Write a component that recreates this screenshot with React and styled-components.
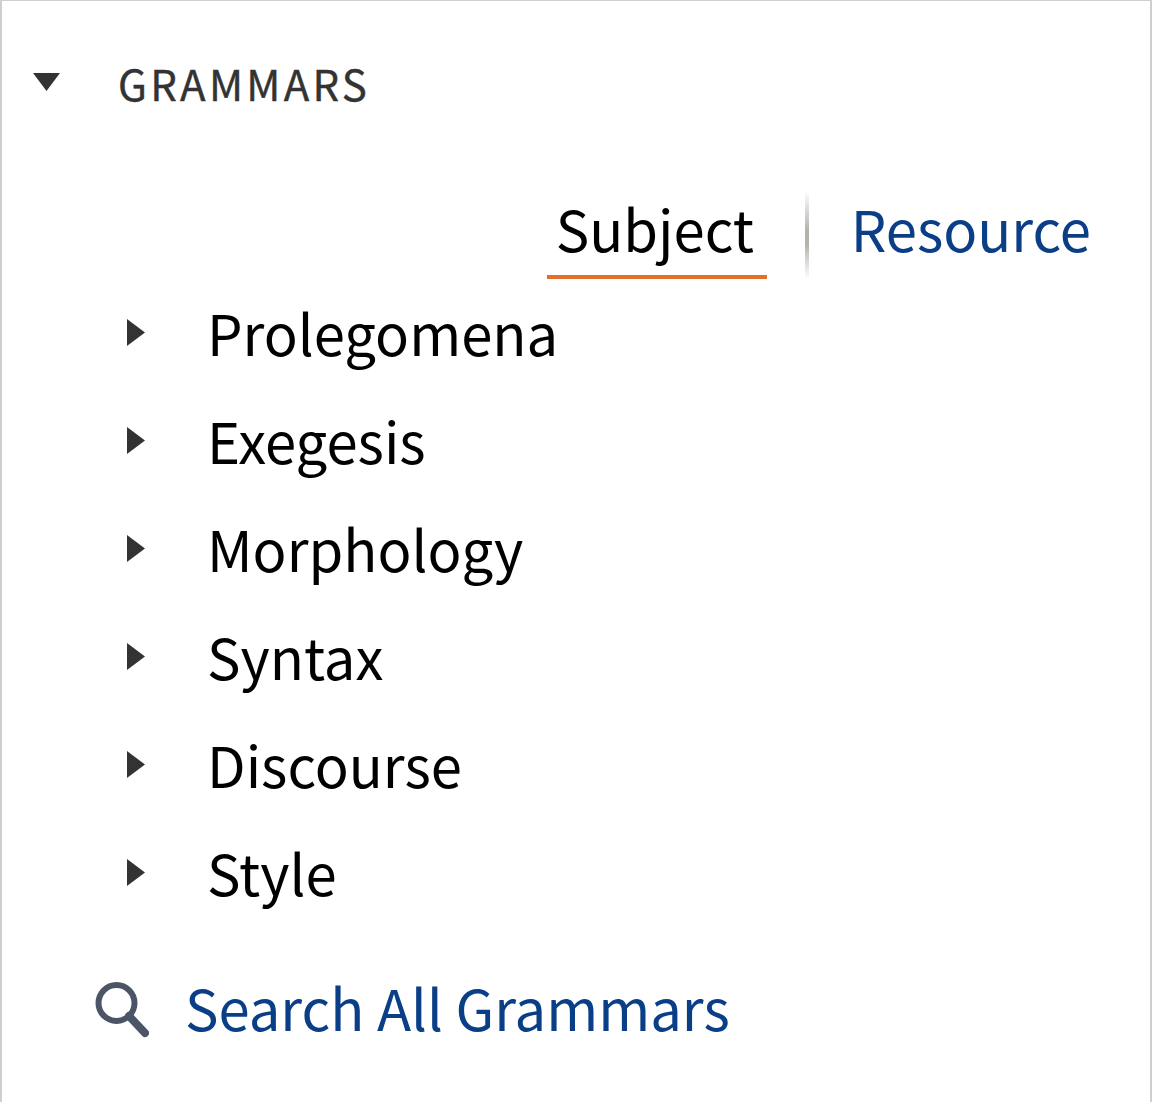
import React from "react";
import styled, { createGlobalStyle } from "styled-components";

const topics = ["Prolegomena", "Exegesis", "Morphology", "Syntax", "Discourse", "Style"];

const App = () => {
  return (
    <>
      <GlobalStyle />
      <Panel>
        <Header>
          <CaretDown viewBox="0 0 27 18">
            <path d="M0 0H27L13.5 18Z" />
          </CaretDown>
          <Title>GRAMMARS</Title>
        </Header>
        <Tabs>
          <Tab $active>Subject</Tab>
          <Divider />
          <Tab>Resource</Tab>
        </Tabs>
        <TopicList>
          {topics.map((topic) => (
            <Topic key={topic}>
              <CaretRight viewBox="0 0 18 27">
                <path d="M0 0L18 13.5L0 27Z" />
              </CaretRight>
              <span>{topic}</span>
            </Topic>
          ))}
        </TopicList>
        <SearchLink>
          <SearchIcon viewBox="0 0 56 56">
            <circle cx="23.5" cy="21" r="18" />
            <path d="M36 34L52 51" />
          </SearchIcon>
          <span>Search All Grammars</span>
        </SearchLink>
      </Panel>
    </>
  );
};

const GlobalStyle = createGlobalStyle`
  html, body {
    margin: 0;
    padding: 0;
    background: #fff;
  }
  body {
    font-family: "Noto Sans CJK JP", "Noto Sans", sans-serif;
  }
`;

const Panel = styled.div`
  box-sizing: border-box;
  width: 1152px;
  height: 1102px;
  overflow: hidden;
  background: #fff;
  border: solid #cfcfcf;
  border-width: 1px 2px 0 2px;
`;

const Header = styled.div`
  display: flex;
  align-items: center;
  height: 56px;
  margin-top: 54px;
  padding-left: 31px;
`;

const CaretDown = styled.svg`
  width: 27px;
  height: 18px;
  margin-top: -2px;
  margin-right: 58px;
  fill: #333;
`;

const Title = styled.div`
  font-size: 42px;
  line-height: 56px;
  letter-spacing: 3.3px;
  color: #333;
  -webkit-text-stroke: 0.4px #333;
`;

const Tabs = styled.div`
  display: flex;
  justify-content: flex-end;
  align-items: stretch;
  height: 88px;
  margin-top: 80px;
  padding-right: 59px;
`;

const Tab = styled.div`
  box-sizing: border-box;
  width: ${(p) => (p.$active ? "220px" : "auto")};
  padding: 0 ${(p) => (p.$active ? "9px" : "0")};
  font-size: 56.2px;
  line-height: 74px;
  color: ${(p) => (p.$active ? "#000" : "#0a3f88")};
  border-bottom: ${(p) => (p.$active ? "4px solid #e2702c" : "none")};
`;

const Divider = styled.div`
  width: 4px;
  margin: 0 42px 0 38px;
  background: linear-gradient(#fff, #b5b1ad 45%, #b5b1ad 60%, #fff);
`;

const TopicList = styled.ul`
  list-style: none;
  margin: -1px 0 0;
  padding: 0 0 0 125px;
`;

const Topic = styled.li`
  display: flex;
  align-items: center;
  height: 108px;
  font-size: 56.2px;
  line-height: 108px;
  color: #000;
`;

const CaretRight = styled.svg`
  width: 18px;
  height: 27px;
  margin-top: 0;
  margin-right: 62px;
  fill: #333;
`;

const SearchLink = styled.div`
  display: flex;
  align-items: center;
  margin-top: 41px;
  padding-left: 91px;
  font-size: 56.2px;
  line-height: 80px;
  color: #0a3f88;
`;

const SearchIcon = styled.svg`
  width: 56px;
  height: 56px;
  margin-top: 6px;
  margin-right: 36px;
  fill: none;
  stroke: #4c5566;
  stroke-width: 6px;
  stroke-linecap: round;
  path {
    stroke-width: 8px;
  }
`;

export default App;
